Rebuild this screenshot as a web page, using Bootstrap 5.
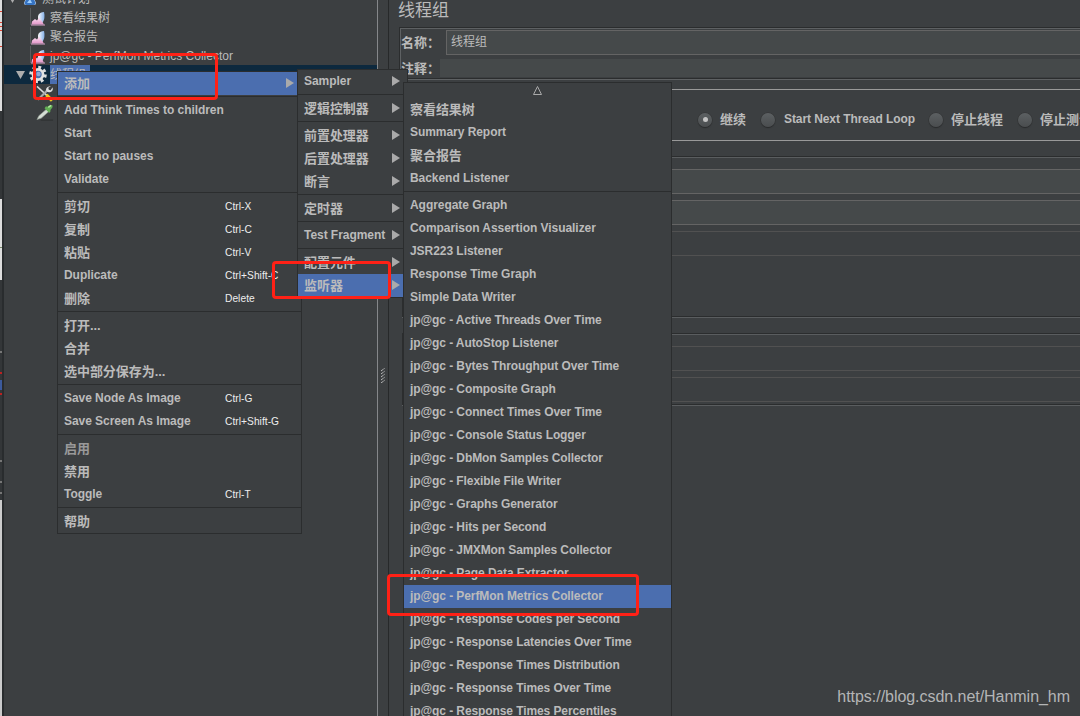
<!DOCTYPE html>
<html lang="zh-CN">
<head>
<meta charset="utf-8">
<title>JMeter</title>
<link href="https://cdn.jsdelivr.net/npm/bootstrap@5.3.0/dist/css/bootstrap.min.css" rel="stylesheet">
<style>
:root{--bg:#3c3f41;--line:#2b2d2e;--hl:#4b6eaf;--fg:#bbb}
body{margin:0;width:1080px;height:716px;overflow:hidden;background:var(--bg);color:var(--fg);font:12px/23px "Liberation Sans","Noto Sans CJK SC",sans-serif;position:relative;white-space:nowrap}
.app{height:716px}
.edge{width:4px;border-right:2px solid #292c2e;background:linear-gradient(#ddd 11px,#d43 11px 12px,#ddd 12px 22px,#d43 22px 23px,#ddd 23px 26px,#d43 26px 27px,#ddd 27px 30px,#d43 30px 31px,#ddd 31px 46px,#d43 46px 47px,#ddd 47px 111px,#333638 111px 199px,#ddd 199px 247px,#786 247px 248px,#ddd 248px 280px,#333638 280px 351px,#777 351px 353px,#333638 353px 372px,#b22 372px 374px,#333638 374px 380px,#3c5a9c 380px 390px,#333638 390px 393px,#b22 393px 395px,#333638 395px 460px,#777 460px 462px,#333638 462px 481px,#777 481px 483px,#333638 483px 492px,#777 492px 494px,#333638 494px 500px,#ccc 500px)}
.tree{width:373px;overflow:hidden;padding-top:8px;margin-top:-19px}
.trow{height:19px;line-height:19px;gap:3px;font-size:12px}
.trow svg{flex:none}
.trow .cjk{line-height:21px;height:19px}
.trow.sel{background:#0d293e}
.trow.sel .lbl{background:var(--hl);width:40px}
.tw{width:11px;flex:none}
.split{width:12px;border-left:1px solid #85878a;border-right:1px solid #27292a}
.grip{width:5px;height:15px;margin-top:368px;margin-left:3px}
.editor{min-width:0;overflow:hidden}
.ttl{font-size:17px;line-height:22px;height:27px;padding-left:9px}
.grp{margin-left:10px;border:1px solid var(--line);border-right:0;box-shadow:inset 1px 1px #5e6163,0 1px #5e6163}
.boxed{border:1px solid var(--line);border-right:0;box-shadow:inset 1px 1px #5a5d5f,0 1px #5a5d5f}
.fld{border:1px solid #646464;background:#45494a;border-right:0;border-left:0;height:25px}
.off{border-color:#515151;background:var(--bg)}
.k{font-weight:bold;font-size:13px}
.opts>*{flex:none}
.radio{width:14px;height:14px;border-radius:50%;background:linear-gradient(#5c6062,#4a4d4f);box-shadow:0 1px 1px #292b2c,0 0 0 .5px #333;display:flex;align-items:center;justify-content:center}
.radio.on:after{content:"";width:5px;height:5px;border-radius:50%;background:#c4c4c4}
.menu{position:absolute;background:var(--bg);border:1px solid var(--line);font-weight:bold;letter-spacing:-.05px}
.it{height:23px;line-height:23px;padding:0 0 0 6px}
.it.act{background:var(--hl)}
.sp{height:4px;padding-top:1px}
.sp:before{content:"";display:block;height:1px;background:var(--line)}
.z{font-size:13px}
.gc{letter-spacing:-.09px}
.key{width:76px;font-weight:normal;font-size:10.2px;letter-spacing:.05px;color:#eee}
.arr{width:0;height:0;border:5px solid transparent;border-left:8px solid #aaa;border-right:0;margin-bottom:1px}
.redbox{position:absolute;border:3px solid #ff2116;border-radius:4px}
.wm{position:absolute;right:10px;bottom:8px;font-size:16px;letter-spacing:-.04px;color:#b4b5b6}
</style>
</head>
<body>
<svg width="0" height="0" class="position-absolute"><defs>
<linearGradient id="pk" x2="0" y2="1"><stop offset="0" stop-color="#ffe6f6"/><stop offset="1" stop-color="#e294c8"/></linearGradient>
<linearGradient id="bl"><stop offset="0" stop-color="#fff"/><stop offset="1" stop-color="#83aee6"/></linearGradient>
<symbol id="chart" viewBox="0 0 18 19"><path d="M1.500 0v17" fill="none" stroke="#5a5d5f"/><path d="M9.500 12C8 7 10 4.500 15 4q1.500 6-1.500 11z" fill="url(#bl)"/><path d="M2.500 16.500l.5-3 3-2.500 2 1.500 2-3 3 4 2 3z" fill="url(#pk)"/><path d="M2 17h14" stroke="#d9a5cb"/></symbol>
<symbol id="flask" viewBox="0 0 18 19"><path d="M6 2h6v5l3 7q0 2-2 2H5q-2 0-2-2l3-7z" fill="#dce9f8"/><path d="M6 8h6l2.500 6q0 2-2 2h-7q-2 0-2-2z" fill="#3674c4"/><path d="M6 14l3-4 2 4z" fill="#9fd0ff"/></symbol>
<symbol id="gear" viewBox="0 0 18 19"><circle cx="9" cy="9.500" r="7.300" fill="none" stroke="#ddd" stroke-width="3" stroke-dasharray="2.900 2.833"/><circle cx="9" cy="9.500" r="6.400" fill="#e2e2e2"/><circle cx="9" cy="9.500" r="3.700" fill="#4d70a7"/><circle cx="9.500" cy="9" r="2.200" fill="#8fabd6"/></symbol>
<symbol id="tools" viewBox="0 0 19 19"><path d="M1 2l11 10" stroke="#ddd" stroke-width="1.500"/><path d="M11 11l6 6" stroke="#f2c51c" stroke-width="3.500"/><path d="M2 16L12 6" stroke="#aaa" stroke-width="2.200"/><path d="M16 1.500l-3 2 .5 2 2 .5 2-3q1 4-2 5-4 1-5-2 0-4 5.500-4.500z" fill="#ddd"/></symbol>
<symbol id="drop" viewBox="0 0 19 19"><path d="M5 17.500h13" stroke="#2b2d2e"/><path d="M1 17l2-4 8-7 2.500 2.500-8 7z" fill="#d5ddd5" stroke="#8c968c" stroke-width=".7"/><path d="M9 5l5 5 1.500-2-.5-1q3-3 2.500-5-2.500-1.500-5.500 1.500l-1.500-.5z" fill="#62ad55"/><path d="M13 4l3-2" stroke="#b4e6a4" stroke-width="1.500"/></symbol>
</defs></svg>
<div class="app d-flex">
 <div class="edge flex-shrink-0"></div>
 <div class="tree flex-shrink-0" id="tree"></div>
 <div class="split flex-shrink-0"><svg class="grip d-block" viewBox="0 0 5 15"><path d="M0 3l4-3M0 6l4-3M0 9l4-3M0 12l4-3M0 15l4-3" stroke="#ddd" stroke-dasharray="1 .6"/></svg></div>
 <main class="editor flex-grow-1">
  <div class="ttl">线程组</div>
  <div class="grp" style="height:52px">
   <div class="d-flex align-items-center" style="padding-top:2px"><span class="k" style="width:46px;padding-left:1px">名称：</span><span class="fld flex-grow-1" style="border-left:1px solid #646464;padding-left:4px">线程组</span></div>
   <div class="d-flex align-items-center" style="padding-top:3px"><span class="k" style="width:40px;height:20px;line-height:22px;padding-left:1px">注释：</span><span class="flex-grow-1" style="height:18px;background:#45494a"></span></div>
  </div>
  <div class="ms-2" style="margin-top:10px;height:52px;border-top:1px solid #999;border-bottom:1px solid #999">
   <div class="opts d-flex align-items-center k" style="padding:18px 0 0 301px">
    <i class="radio on"></i><span style="width:49px;padding-left:8px">继续</span>
    <i class="radio"></i><span style="width:154px;padding-left:9px;font-size:12px;letter-spacing:-.08px">Start Next Thread Loop</span>
    <i class="radio"></i><span style="width:75px;padding-left:8px">停止线程</span>
    <i class="radio"></i><span style="padding-left:8px">停止测试</span>
   </div>
  </div>
  <div class="boxed" style="margin-left:13px;margin-top:15px;height:161px;padding-top:12px">
   <div class="fld"></div><div class="fld" style="margin-top:6px"></div><div class="fld off" style="margin-top:6px"></div>
  </div>
  <div style="height:16px"></div>
  <div class="boxed" style="margin-left:13px;height:72px;padding-top:12px">
   <div class="fld off"></div><div class="fld off" style="margin-top:6px"></div>
  </div>
 </main>
</div>

<div class="menu" id="m1" style="left:57px;top:71px;width:245px"></div>
<div class="menu" id="m2" style="left:297px;top:69px;width:111px"></div>
<div class="menu" id="m3" style="left:403px;top:82px;width:269px"></div>
<div class="redbox" style="left:33px;top:53px;width:185px;height:47px"></div>
<div class="redbox" style="left:272px;top:261px;width:119px;height:38px"></div>
<div class="redbox" style="left:387px;top:574px;width:252px;height:42px"></div>
<div class="wm">https://blog.csdn.net/Hanmin_hm</div>

<script src="https://cdn.jsdelivr.net/npm/bootstrap@5.3.0/dist/js/bootstrap.bundle.min.js"></script>
<script>
const zh = s => /[\u4e00-\u9fff]/.test(s) ? ' z' : s.startsWith('jp@gc') ? ' gc' : '';
const row = (t, right = '', act = false) => t === '-' ? '<div class="sp"></div>' :
  `<div class="it d-flex align-items-center justify-content-between${zh(t)}${act ? ' act' : ''}"><span>${t}</span>${right}</div>`;
const arrow = m => `<i class="arr" style="margin-right:${m}px"></i>`;
const m1 = [['-'], ['Add Think Times to children'], ['Start'], ['Start no pauses'], ['Validate'], ['-'],
 ['剪切','Ctrl-X'], ['复制','Ctrl-C'], ['粘贴','Ctrl-V'], ['Duplicate','Ctrl+Shift-C'], ['删除','Delete'], ['-'],
 ['打开...'], ['合并'], ['选中部分保存为...'], ['-'], ['Save Node As Image','Ctrl-G'], ['Save Screen As Image','Ctrl+Shift-G'], ['-'],
 ['<span style="color:#999">启用</span>'], ['禁用'], ['Toggle','Ctrl-T'], ['-'], ['帮助']];
document.getElementById('m1').innerHTML = row('添加', arrow(7), true) + m1.map(([t, k]) => row(t, k ? `<span class="key">${k}</span>` : '')).join('');
document.getElementById('m2').innerHTML = ['Sampler','-','逻辑控制器','-','前置处理器','后置处理器','断言','-','定时器','-','Test Fragment','-','配置元件','监听器']
 .map(t => row(t, arrow(7), t === '监听器')).join('');
const g = ['Active Threads Over Time','AutoStop Listener','Bytes Throughput Over Time','Composite Graph','Connect Times Over Time','Console Status Logger','DbMon Samples Collector','Flexible File Writer','Graphs Generator','Hits per Second','JMXMon Samples Collector','Page Data Extractor','PerfMon Metrics Collector','Response Codes per Second','Response Latencies Over Time','Response Times Distribution','Response Times Over Time','Response Times Percentiles'].map(s => 'jp@gc - ' + s);
document.getElementById('m3').innerHTML = '<svg class="d-block mx-auto" width="11" height="15"><path d="M1.500 11.500L5.500 3.500l4 8z" fill="none" stroke="#aaa"/></svg>' +
 ['察看结果树','Summary Report','聚合报告','Backend Listener','-','Aggregate Graph','Comparison Assertion Visualizer','JSR223 Listener','Response Time Graph','Simple Data Writer', ...g]
 .map(t => row(t, '', t.includes('PerfMon'))).join('');
const icon = (n, w = 18) => `<svg width="${w}" height="19"><use href="#${n}"/></svg>`;
const tri = '<svg class="tw" height="19" viewBox="0 0 11 19"><path d="M1 6h9l-4.500 8z" fill="#adadad"/></svg>';
const node = (t, n, open, pad, cls = '') =>
 `<div class="trow d-flex ${cls}" style="padding-left:${pad}px">${open ? tri : '<span class="tw"></span>'}${icon(n)}<span class="lbl${zh(t) ? ' cjk' : ''}">${t}</span></div>`;
document.getElementById('tree').innerHTML = node('测试计划', 'flask', true, 3) + node('察看结果树', 'chart', false, 11) +
 node('聚合报告', 'chart', false, 11) + node('jp@gc - PerfMon Metrics Collector', 'chart', false, 11) +
 node('线程组', 'gear', true, 11, 'sel') + node('', 'tools', false, 18) + node('', 'drop', false, 18);
</script>
</body>
</html>
